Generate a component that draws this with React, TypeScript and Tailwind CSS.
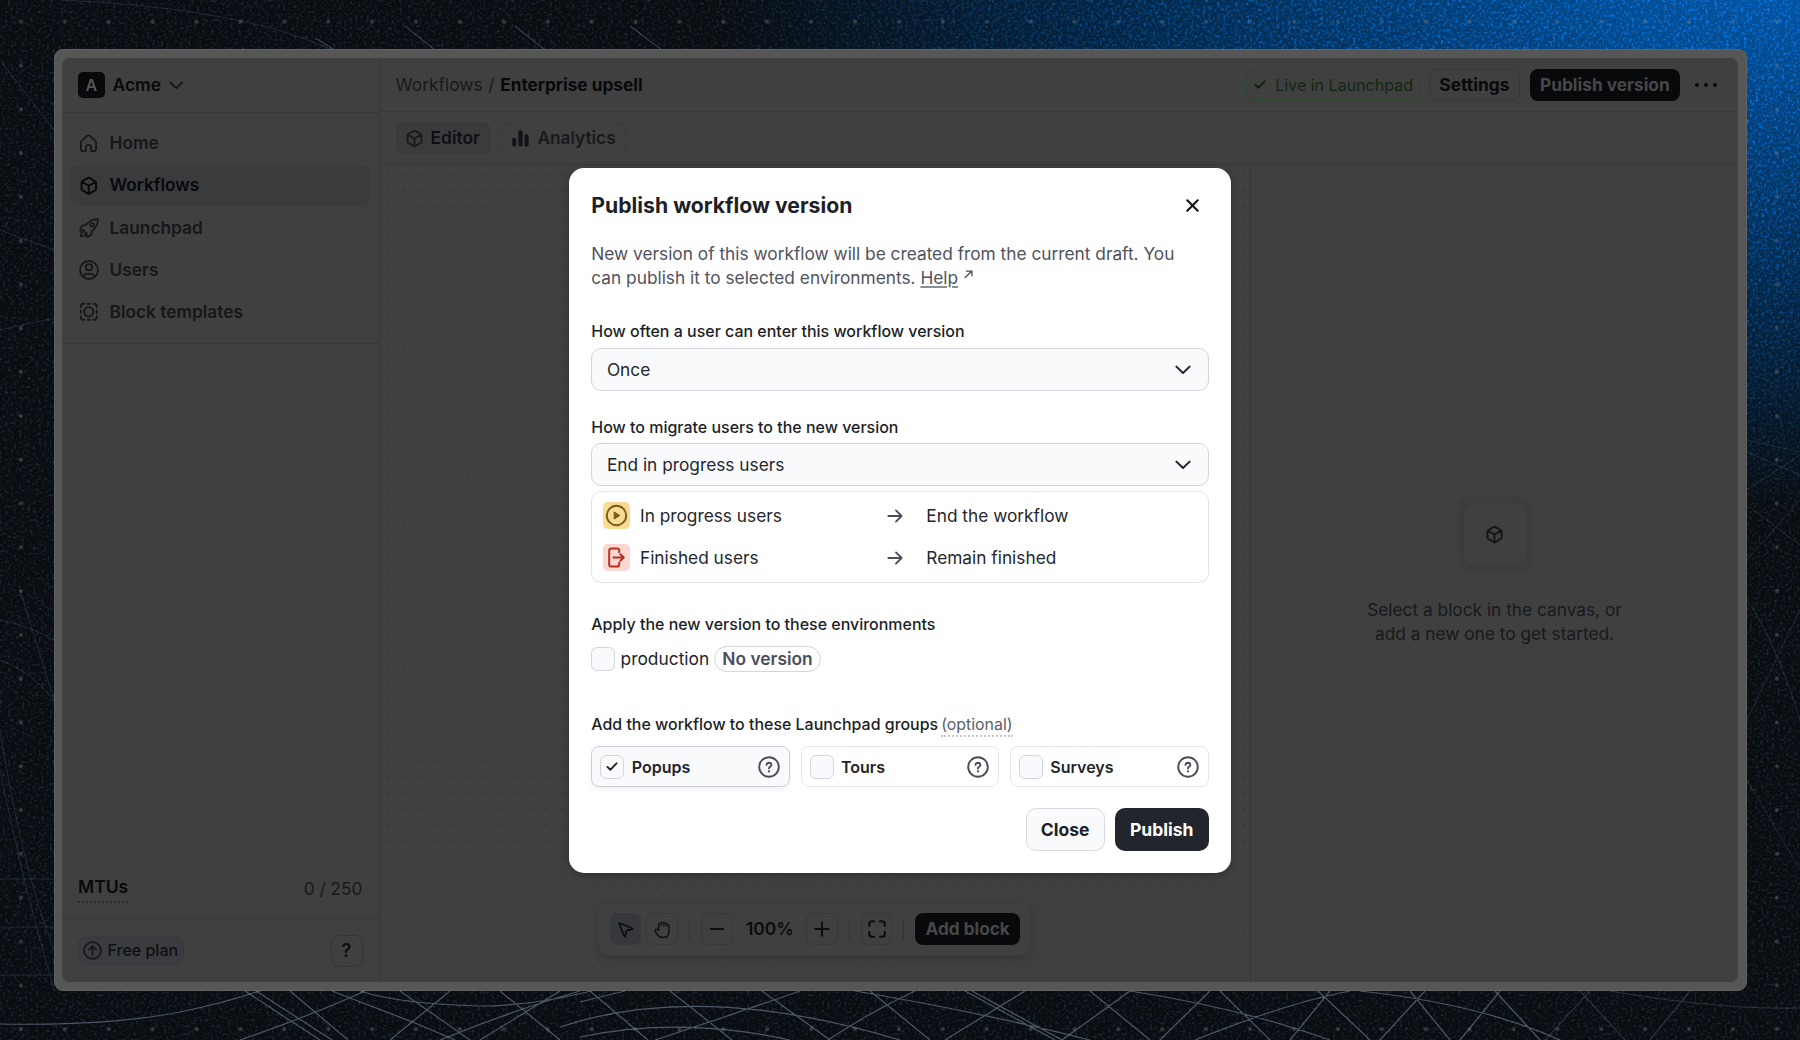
import React from "react";
import { MousePointer2 } from "lucide-react";
import { IoRocketOutline } from "react-icons/io5";

type IconProps = { className?: string };

const CubeIcon = ({ className = "" }: IconProps) => (
  <svg viewBox="0 0 20 20" className={`shrink-0 ${className}`} fill="none" stroke="currentColor" strokeWidth="2" strokeLinejoin="round" strokeLinecap="round">
    <path d="M9.3 2 L3.2 5.5 Q2.6 5.9 2.6 6.6 V13.4 Q2.6 14.1 3.2 14.5 L9.3 18 Q10 18.3 10.7 18 L16.8 14.5 Q17.4 14.1 17.4 13.4 V6.6 Q17.4 5.9 16.8 5.5 L10.7 2 Q10 1.7 9.3 2Z M2.9 6 L10 10 L17.1 6 M10 10 V18" />
  </svg>
);

const HomeIcon = ({ className = "" }: IconProps) => (
  <svg viewBox="0 0 20 20" className={`shrink-0 ${className}`} fill="none" stroke="currentColor" strokeWidth="1.9" strokeLinejoin="round" strokeLinecap="round">
    <path d="M7.2 18 H4.6 Q2 18 2 15.4 V9.6 Q2 8 3.2 6.9 L8.5 2 Q10 .8 11.5 2 L16.8 6.9 Q18 8 18 9.6 V15.4 Q18 18 15.4 18 H12.8 V14 Q12.6 11.6 10 11.6 Q7.4 11.6 7.2 14Z" />
  </svg>
);

const UserIcon = ({ className = "" }: IconProps) => (
  <svg viewBox="0 0 20 20" className={`shrink-0 ${className}`} fill="none" stroke="currentColor" strokeWidth="1.8" strokeLinecap="round">
    <circle cx="10" cy="10" r="9" />
    <circle cx="10" cy="7.3" r="3.1" />
    <path d="M4.4 16.4 Q5.6 13.6 10 13.6 T15.6 16.4" />
  </svg>
);

const TemplateIcon = ({ className = "" }: IconProps) => (
  <svg viewBox="0 0 20 20" className={`shrink-0 ${className}`} fill="none" stroke="currentColor" strokeWidth="1.9" strokeLinecap="round">
    <circle cx="10" cy="10" r="4.7" />
    <path d="M1.8 5.3 V4.6 Q1.8 1.8 4.6 1.8 H5.3 M14.7 1.8 H15.4 Q18.2 1.8 18.2 4.6 V5.3 M18.2 14.7 V15.4 Q18.2 18.2 15.4 18.2 H14.7 M5.3 18.2 H4.6 Q1.8 18.2 1.8 15.4 V14.7 M8.8 1.8 H11.2 M8.8 18.2 H11.2 M1.8 8.8 V11.2 M18.2 8.8 V11.2" />
  </svg>
);

const HandIcon = ({ className = "" }: IconProps) => (
  <svg viewBox="0 0 18 19" className={`shrink-0 ${className}`} fill="none" stroke="currentColor" strokeWidth="1.6" strokeLinejoin="round" strokeLinecap="round">
    <path d="M5.6 10.2 V4.9 Q5.6 3.2 6.9 3.2 Q7.6 3.2 8 3.7 Q8.2 2.3 9.4 2.3 Q10.4 2.3 10.8 3.2 Q11.3 2.7 12 2.7 Q13.2 2.8 13.5 4 Q15.9 4 15.9 6.4 V11.4 Q15.9 17.4 10.6 17.4 H9.4 Q6.2 17.4 4.6 15 L2.4 11.6 Q1.8 10.2 2.8 9.4 Q3.8 8.8 4.6 9.6Z M8 4 V5.8 M10.8 3.8 V5.8 M13.5 4.4 V6.2" />
  </svg>
);

const Chevron = ({ className = "" }: IconProps) => (
  <svg viewBox="0 0 16 10" className={`shrink-0 ${className}`} fill="none" stroke="currentColor" strokeWidth="2" strokeLinecap="round" strokeLinejoin="round">
    <path d="M1.4 1.6 L8 8 L14.6 1.6" />
  </svg>
);

const CheckIcon = ({ className = "" }: IconProps) => (
  <svg viewBox="0 0 12 10" className={`h-[9.5px] w-3 shrink-0 ${className}`} fill="none" stroke="currentColor" strokeWidth="2" strokeLinecap="round" strokeLinejoin="round">
    <path d="M1.2 5.2 L4.2 8.2 L10.8 1.4" />
  </svg>
);

const ArrowRight = () => (
  <svg viewBox="0 0 16 14" className="h-[14px] w-4 shrink-0 text-[#4b4e59]" fill="none" stroke="currentColor" strokeWidth="1.9" strokeLinecap="round" strokeLinejoin="round">
    <path d="M1.4 7 H14.4 M9 1.4 L14.6 7 L9 12.6" />
  </svg>
);

const HelpIcon = () => (
  <svg viewBox="0 0 22 22" className="size-[22px] shrink-0 text-[#4b4e59]" fill="none" stroke="currentColor" strokeWidth="1.9" strokeLinecap="round">
    <circle cx="11" cy="11" r="9.8" />
    <path d="M8.5 8.9 Q8.7 6.7 11 6.7 Q13.4 6.8 13.4 8.9 Q13.3 10.2 12 10.8 Q11 11.3 11 12.5" />
    <circle cx="11" cy="15.4" r=".5" fill="currentColor" strokeWidth="1.2" />
  </svg>
);

const nav: [string, React.ReactNode][] = [
  ["Home", <HomeIcon className="size-[19px]" />],
  ["Workflows", <CubeIcon className="size-[19.5px]" />],
  ["Launchpad", <IoRocketOutline className="size-[22px] shrink-0 stroke-[#161719] [&_path]:[stroke-width:40]" />],
  ["Users", <UserIcon className="size-5" />],
  ["Block templates", <TemplateIcon className="size-[19.5px]" />],
];

function Backdrop() {
  return (
    <svg className="absolute inset-0 size-full" viewBox="0 0 1800 1040" preserveAspectRatio="none" aria-hidden="true">
      <defs>
        <radialGradient id="glow" gradientUnits="userSpaceOnUse" cx="0" cy="0" r="1" gradientTransform="translate(1790 -50) scale(1080 560)">
          <stop offset="0" stopColor="#0059b0" />
          <stop offset=".2" stopColor="#004a90" />
          <stop offset=".42" stopColor="#003668" />
          <stop offset=".65" stopColor="#012342" />
          <stop offset=".85" stopColor="#061524" />
          <stop offset="1" stopColor="#090d12" />
        </radialGradient>
        <radialGradient id="glowMask" gradientUnits="userSpaceOnUse" cx="0" cy="0" r="1" gradientTransform="translate(1790 -50) scale(1080 560)">
          <stop offset="0" stopColor="#fff" />
          <stop offset=".5" stopColor="#999" />
          <stop offset="1" stopColor="#000" />
        </radialGradient>
        <mask id="blueArea"><rect width="1800" height="1040" fill="url(#glowMask)" /></mask>
        <filter id="grain" x="0" y="0" width="100%" height="100%" colorInterpolationFilters="sRGB">
          <feTurbulence type="fractalNoise" baseFrequency=".36" numOctaves="2" seed="4" />
          <feColorMatrix values="0 0 0 0 .3  0 0 0 0 .38  0 0 0 0 .45  2.4 0 0 0 -1.2" />
        </filter>
        <filter id="sparkle" x="0" y="0" width="100%" height="100%" colorInterpolationFilters="sRGB">
          <feTurbulence type="fractalNoise" baseFrequency=".34" numOctaves="2" seed="9" />
          <feColorMatrix values="0 0 0 0 0  0 0 0 0 .52  0 0 0 0 1  3.2 0 0 0 -1.6" />
        </filter>
        <pattern id="grid" x="-1.1" y="-.2" width="43.9" height="43.8" patternUnits="userSpaceOnUse">
          <circle cx="22" cy="22" r="2" fill="#a09ca8" fillOpacity=".3" />
        </pattern>
      </defs>
      <rect width="1800" height="1040" fill="url(#glow)" />
      <rect width="1800" height="1040" filter="url(#grain)" opacity=".42" />
      <g mask="url(#blueArea)"><rect width="1800" height="1040" filter="url(#sparkle)" opacity=".95" /></g>
      <rect width="1800" height="1040" fill="url(#grid)" />
      <g fill="none" stroke="#8fa0b4" strokeOpacity=".5" strokeWidth="1.2">
        <path d="M0 1024 Q110 1026 180 1012 T300 975" />
        <path d="M245 991 L320 1040 M256 991 L332 1040 M290 991 L348 1040 M240 1040 Q310 1016 365 991 M332 991 L420 1025 L455 1040" />
        <path d="M360 991 Q400 1004 480 1006 Q540 1006 610 986 M440 1040 Q520 1008 580 991 M480 1040 L560 991 M390 1040 L450 991 M400 991 L470 1040 M500 991 L560 1040" />
        <path d="M580 1002 L625 991 M590 991 L648 1040 M670 991 L732 1040 M762 991 L830 1040 M560 1027 Q700 980 900 1040 M580 1037 Q680 1016 790 1040 M655 1040 Q740 1012 800 991 M828 1040 Q870 1012 915 991 M855 991 Q980 1012 1090 1040 M870 991 L930 1040 M945 1040 L1025 991 M965 991 L1055 1040 M972 991 L1062 1040" />
        <path d="M1062 1040 L1130 991 M1090 991 L1150 1040 M1130 991 Q1240 1008 1330 1040 M1160 1040 L1210 991 M1220 991 L1270 1040 M1195 1040 Q1290 1002 1350 991 M1290 1040 L1330 991 M1318 991 L1370 1040 M1380 1040 L1425 991 M1410 991 L1450 1040 M1460 1040 L1500 991 M1495 991 L1540 1040 M1360 991 Q1480 1004 1560 1040" />
        <path d="M1545 1040 L1590 991 M1580 991 L1625 1040 M1650 1040 L1690 991 M1610 991 Q1720 1010 1800 1008" strokeOpacity=".24" />
      </g>
      <g fill="none" stroke="#7e93ab" strokeOpacity=".2" strokeWidth="1">
        <path d="M0 730 Q20 860 54 950 M0 770 Q22 880 54 990 M0 620 Q30 626 54 640 M0 660 Q30 670 54 700 M0 879 H54 M0 927 H54 M0 975 H54 M20 590 L54 700" />
        <path d="M1747 440 L1800 452 M1747 452 L1800 475 M1747 490 L1800 455 M1747 505 L1800 545 M1747 560 L1800 500 M1747 600 Q1775 640 1800 720 M1747 720 L1800 610 M1747 780 L1800 870" />
        <path d="M60 0 Q240 8 330 49 M0 330 L54 318 M0 230 L54 250 M0 60 L54 130" />
        <path d="M315 38 L335 50 M405 26 L435 50 M515 26 L545 50 M630 26 L662 50" strokeOpacity=".5" />
      </g>
    </svg>
  );
}

function Sidebar() {
  return (
    <aside className="flex w-[317.5px] shrink-0 flex-col border-r border-[#393939]">
      <div className="flex h-[55px] shrink-0 items-center border-b border-[#363636] pl-4">
        <span className="flex size-[26.5px] items-center justify-center rounded-[5px] bg-[#08090b] text-[16px] font-semibold text-[#555]">A</span>
        <span className="ml-2 text-[17.4px] font-semibold text-[#08090b]">Acme</span>
        <Chevron className="ml-[8px] h-[9px] w-[14.5px] text-[#131416]" />
      </div>
      <nav className="flex h-[231px] shrink-0 flex-col gap-[2.3px] border-b border-[#363636] px-[8px] pt-[10px]">
        {nav.map(([label, icon]) => (
          <div key={label} className={label === "Workflows" ? "flex h-10 items-center rounded-lg bg-[#3a3b3d] text-[#08090b]" : "flex h-10 items-center text-[#161719]"}>
            <span className="flex w-[37px] justify-center">{icon}</span>
            <span className="ml-[2.6px] text-[17.3px] font-semibold">{label}</span>
          </div>
        ))}
      </nav>
      <div className="grow" />
      <div className="flex h-[59px] shrink-0 items-start justify-between border-b border-[#363636] px-4">
        <span className="mt-[13px] border-b-[2.5px] border-dotted border-[#292a2c] text-[17.5px] leading-[28px] font-semibold text-[#08090b]">MTUs</span>
        <span className="mt-[15px] text-[17.3px] leading-[28px] text-[#18191b]">0 / 250</span>
      </div>
      <div className="flex h-[63px] shrink-0 items-center justify-between px-4">
        <span className="flex h-[29px] items-center rounded-[9px] border border-[#37393c] bg-[#3b3c3f] pr-[5px] pb-px pl-[3.5px] text-[16px] font-medium text-[#0e0f11]">
          <svg viewBox="0 0 20 20" className="mr-[6px] size-[19px]" fill="none" stroke="#17181b" strokeWidth="1.9" strokeLinecap="round" strokeLinejoin="round"><circle cx="10" cy="10" r="8.9" /><path d="M10 14.8 V6 M6.2 9 L10 5.3 L13.8 9" /></svg>
          Free plan
        </span>
        <span className="flex size-8 items-center justify-center rounded-lg border border-[#353537] text-[18px] font-semibold text-[#0b0c0e]">?</span>
      </div>
    </aside>
  );
}

function TopBars() {
  return (
    <>
      <header className="flex h-[54px] shrink-0 items-center border-b border-[#383838] pr-[21px] pl-4 leading-6">
        <span className="text-[17.4px] text-[#18191b]">Workflows</span>
        <span className="mx-[5.6px] text-[17.4px] text-[#18191b]">/</span>
        <span className="text-[17.25px] font-bold text-[#08090b]">Enterprise upsell</span>
        <div className="grow" />
        <span className="flex h-8 items-center rounded-lg border border-[#284a2a] bg-[#3f403f] pr-[5.5px] pl-[7px] text-[16.05px] text-[#122713]">
          <CheckIcon className="mr-[9.5px] text-[#0e220f]" />Live in Launchpad
        </span>
        <span className="ml-[9.5px] flex h-8 items-center rounded-lg border border-[#383838] px-[9.3px] text-[17.4px] font-bold text-[#08090b]">Settings</span>
        <span className="ml-[10px] flex h-8 items-center rounded-lg bg-[#08090b] px-[10.3px] text-[17.25px] font-bold text-[#464748]">Publish version</span>
        <svg viewBox="0 0 22 4" className="ml-[15px] h-1 w-[22px] fill-[#0b0c0e]"><circle cx="2" cy="2" r="2" /><circle cx="11" cy="2" r="2" /><circle cx="20" cy="2" r="2" /></svg>
      </header>
      <div className="flex h-[53px] shrink-0 items-center gap-[10px] border-b border-[#383838] pl-4">
        <span className="flex h-[31px] items-center rounded-lg border border-[#36383b] bg-[#3a3b3d] pr-[10px] pl-[8.5px] text-[17.4px] font-semibold text-[#0e0f11]">
          <CubeIcon className="mr-[6.5px] size-[19px] text-[#1a1b1e]" />Editor
        </span>
        <span className="flex h-[31px] items-center rounded-lg border border-[#3b3b3b] px-[10.5px] text-[17.25px] font-semibold text-[#18191c]">
          <svg viewBox="0 0 17 17" className="mr-[8px] size-[17px] fill-[#131417]"><rect x=".2" y="8" width="4.1" height="8.6" rx="1.6" /><rect x="6.3" y=".2" width="4.3" height="16.4" rx="1.6" /><rect x="12.5" y="4.3" width="4.1" height="12.3" rx="1.6" /></svg>
          Analytics
        </span>
      </div>
    </>
  );
}

function Toolbar() {
  const box = "flex size-[31.7px] shrink-0 items-center justify-center rounded-lg border border-[#383838] text-[#0c0d0f]";
  return (
    <div className="flex h-[54px] w-[433px] items-center rounded-[11px] border border-[#3c3c3c] bg-[#404040] pl-[10.5px] shadow-[0_4px_9px_rgba(0,0,0,0.14)]">
      <span className="flex size-[31.7px] shrink-0 items-center justify-center rounded-lg bg-[#36383b] text-[#0c0d0f]"><MousePointer2 size={19} strokeWidth={2.1} /></span>
      <span className={`${box} ml-[5px]`}><HandIcon className="h-[19px] w-[18px] text-[#141518]" /></span>
      <span className="ml-[11px] h-[22px] w-px bg-[#343434]" />
      <span className={`${box} ml-[11px]`}><svg viewBox="0 0 16 16" className="size-[14px]" stroke="currentColor" strokeWidth="2.2"><path d="M0 8H16" /></svg></span>
      <span className="ml-[12px] w-[50px] text-center text-[17.4px] font-semibold text-[#0b0c0e]">100%</span>
      <span className={`${box} ml-[11.5px]`}><svg viewBox="0 0 16 16" className="size-4" stroke="currentColor" strokeWidth="2"><path d="M.6 8H15.4M8 .6V15.4" /></svg></span>
      <span className="ml-[11px] h-[22px] w-px bg-[#343434]" />
      <span className={`${box} ml-[10.7px]`}><svg viewBox="0 0 18 18" className="size-[18px]" fill="none" stroke="currentColor" strokeWidth="2.1" strokeLinecap="round"><path d="M1.2 6V4Q1.2 1.2 4 1.2H6M12 1.2H14Q16.8 1.2 16.8 4V6M16.8 12V14Q16.8 16.8 14 16.8H12M6 16.8H4Q1.2 16.8 1.2 14V12" /></svg></span>
      <span className="ml-[11px] h-[22px] w-px bg-[#343434]" />
      <span className="ml-[10.5px] flex h-8 w-[105.5px] shrink-0 items-center justify-center rounded-lg bg-[#08090b] text-[17.2px] font-bold text-[#464748]">Add block</span>
    </div>
  );
}

function EmptyPanel() {
  return (
    <div className="flex w-[488px] shrink-0 flex-col items-center border-l border-[#383838] pt-[331px]">
      <div className="rounded-[16px] bg-[#3c3d3f] p-[6px]">
        <div className="flex size-[64px] items-center justify-center rounded-[11px] border border-[#3a3b3d] bg-[#404040]"><CubeIcon className="size-[19px] text-[#141517]" /></div>
      </div>
      <p className="mt-[26px] text-center text-[17.3px] leading-[23.8px] text-[#18191b]">Select a block in the canvas, or<br />add a new one to get started.</p>
    </div>
  );
}

function Select({ label, value, className = "" }: { label: string; value: string; className?: string }) {
  return (
    <div className={className}>
      <div className="text-[15.97px] leading-[20px] font-medium text-[#1d1f26]">{label}</div>
      <div className="mt-[5.7px] flex h-[42.7px] items-center justify-between rounded-[10px] border border-[#d3d5dc] bg-[#f9fafc] pt-[0.5px] pr-[17px] pl-[14.6px] text-[17.3px] text-[#24262e]">
        <span>{value}</span>
        <Chevron className="h-[10px] w-4 text-[#22242b]" />
      </div>
    </div>
  );
}

function CheckBox({ checked = false }: { checked?: boolean }) {
  return <span className="flex size-6 shrink-0 items-center justify-center rounded-[6px] border border-[#d3d5dc] bg-[#f9fafc]">{checked && <CheckIcon className="text-[#22242b]" />}</span>;
}

function Dialog() {
  return (
    <div role="dialog" className="flex h-[705px] w-[661.4px] flex-col rounded-[15px] bg-white px-[22px] shadow-[0_2px_8px_rgba(0,0,0,0.25)]">
      <div className="mt-[23.2px] flex h-[30px] items-center justify-between pr-[9.5px]">
        <h2 className="text-[21.2px] font-bold text-[#1d1f26]">Publish workflow version</h2>
        <svg viewBox="0 0 13 13" className="size-[13px] text-[#17181d]" stroke="currentColor" strokeWidth="2.2" strokeLinecap="round"><path d="M1.3 1.3 11.7 11.7 M11.7 1.3 1.3 11.7" /></svg>
      </div>
      <p className="mt-[21.3px] text-[17.3px] leading-[23.9px] whitespace-nowrap text-[#4f525d]">
        New version of this workflow will be created from the current draft. You<br />can publish it to selected environments.{" "}
        <span className="underline decoration-[#8b8e98] decoration-[1.5px] underline-offset-2">Help</span>
        <svg viewBox="0 0 10 10" className="ml-[6px] inline-block size-[9px] -translate-y-[5px]" fill="none" stroke="currentColor" strokeWidth="1.5"><path d="M.8 8.8 L8.7 1.2 M2.2 1.2 H8.8 V7" /></svg>
      </p>
      <Select className="mt-[32.6px]" label="How often a user can enter this workflow version" value="Once" />
      <Select className="mt-[26.9px]" label="How to migrate users to the new version" value="End in progress users" />
      <div className="mt-[5.2px] grid h-[91.5px] grid-cols-[284.3px_39.4px_1fr] grid-rows-[27px_27px] items-center gap-y-[15px] rounded-[10px] border border-[#e2e3e8] pt-[10px] pl-[10.3px] text-[17.3px] text-[#24262e]">
        <span className="flex items-center">
          <svg viewBox="0 0 27 27" className="mr-[10.4px] size-[27px]"><rect width="27" height="27" rx="5" fill="#f8dc95" /><circle cx="13.5" cy="13.5" r="9.7" fill="none" stroke="#7c5c11" strokeWidth="1.9" /><path d="M11.2 10 L16.8 13.5 L11.2 17Z" fill="#7c5c11" stroke="#7c5c11" strokeWidth="1" strokeLinejoin="round" /></svg>
          In progress users
        </span>
        <ArrowRight />
        <span>End the workflow</span>
        <span className="flex items-center">
          <svg viewBox="0 0 27 27" className="mr-[10.4px] size-[27px]"><rect width="27" height="27" rx="5" fill="#fbd7d1" /><path d="M16.2 8.3 V6.6 Q16.2 4.5 14 4.5 H8.4 Q6.2 4.5 6.2 6.7 V20.3 Q6.2 22.5 8.4 22.5 H14 Q16.2 22.5 16.2 20.4 V18.7 M10.4 13.5 H20.6 M17.4 10.2 L20.8 13.5 L17.4 16.8" fill="none" stroke="#b8301f" strokeWidth="2" strokeLinecap="round" strokeLinejoin="round" /></svg>
          Finished users
        </span>
        <ArrowRight />
        <span>Remain finished</span>
      </div>
      <div className="mt-[32.4px] text-[15.97px] leading-[20px] font-medium text-[#1d1f26]">Apply the new version to these environments</div>
      <div className="mt-[10.9px] flex h-[26px] items-center text-[17.35px] text-[#24262e]">
        <CheckBox />
        <span className="ml-[5.3px]">production</span>
        <span className="ml-[4.5px] flex h-[26px] items-center rounded-full border border-[#d3d5dc] px-[7.7px] text-[17.35px] font-semibold text-[#4b4e59]">No version</span>
      </div>
      <div className="mt-[42.8px] flex items-start text-[15.95px] leading-[20px] font-medium text-[#1d1f26]">
        Add the workflow to these Launchpad groups
        <span className="ml-[3px] border-b-[2.5px] border-dotted border-[#c3c5cd] text-[15.9px] font-normal text-[#5b5e69]">(optional)</span>
      </div>
      <div className="mt-[9.1px] grid grid-cols-3 gap-[10.3px]">
        {["Popups", "Tours", "Surveys"].map((name, i) => (
          <div key={name} className={i === 0 ? "flex h-[41.5px] items-center rounded-lg border border-[#cdd0d8] bg-[#f9fafc] pr-[9px] pl-2 shadow-[0_3px_5px_rgba(0,0,0,0.05)]" : "flex h-[41.5px] items-center rounded-lg border border-[#e4e5ea] pr-[9px] pl-2"}>
            <CheckBox checked={i === 0} />
            <span className="ml-[7.5px] grow text-[16px] font-semibold text-[#22242b]">{name}</span>
            <HelpIcon />
          </div>
        ))}
      </div>
      <div className="mt-[20.5px] flex justify-end gap-[10px] text-[17.5px] font-bold">
        <button className="h-[43px] w-[79px] rounded-[10px] border border-[#d8dae0] bg-[#f9fafc] pt-px text-[#1d1f26]">Close</button>
        <button className="h-[43px] w-[94px] rounded-[10px] bg-[#23252d] pt-px text-white">Publish</button>
      </div>
    </div>
  );
}

export default function App() {
  return (
    <div className="relative flex h-[1040px] w-[1800px] items-start overflow-hidden bg-[#0a0f16] font-['Inter',sans-serif]">
      <Backdrop />
      <div className="relative mt-[49px] ml-[53.5px] h-[941.5px] w-[1693px] rounded-[9px] border border-[#626262] bg-[#565656] p-[7.5px] pt-[8px]">
        <div className="flex h-[924px] w-[1676px] overflow-hidden rounded-[7px] bg-[#404040]">
          <Sidebar />
          <main className="flex min-w-0 grow flex-col">
            <TopBars />
            <div className="flex min-h-0 grow">
              <div className="flex grow items-end justify-center bg-[radial-gradient(circle,#373737_1px,transparent_1.5px)] bg-[size:15.87px_15.87px] bg-[position:-0.3px_1.8px] pb-[26px]">
                <Toolbar />
              </div>
              <EmptyPanel />
            </div>
          </main>
        </div>
      </div>
      <div className="absolute inset-0 flex items-center justify-center">
        <Dialog />
      </div>
    </div>
  );
}
